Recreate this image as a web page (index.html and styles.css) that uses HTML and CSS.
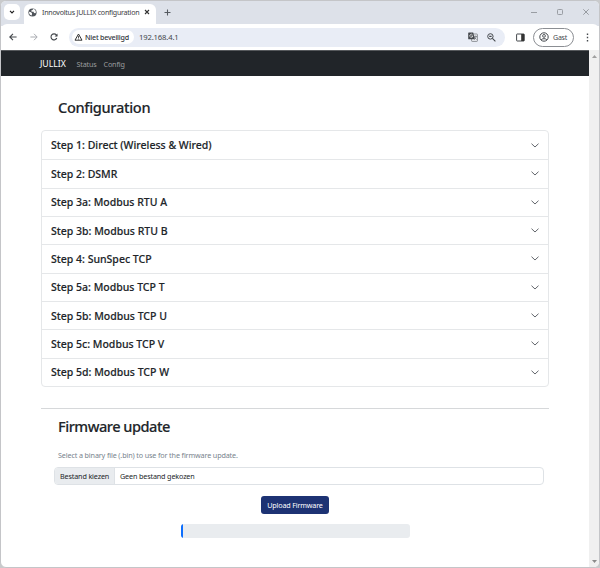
FILE: index.html
```html
<!DOCTYPE html>
<html lang="nl">
<head>
<meta charset="utf-8">
<title>Innovoltus JULLIX configuration</title>
<link rel="stylesheet" href="styles.css">
</head>
<body>
<div class="window">
  <header class="tabstrip">
    <div class="tabsearch"><svg width="6" height="4" viewBox="0 0 6 4"><path d="M1 .8l2 2 2-2" fill="none" stroke="#222" stroke-width="1.2"/></svg></div>
    <div class="tab">
      <svg class="globe" width="9" height="9" viewBox="0 0 9 9"><circle cx="4.5" cy="4.5" r="4.1" fill="#50555b"/><path d="M1.1 3.8l2 .5 1 1.1-.4 2.2C1.8 7.2.8 5.5 1.1 3.8zM5.1.9l-.5 1.2-1.4.5.4 1.1 2 .1.4 1.3 1.2.2.7-.8C8 2.3 6.8 1.1 5.1.9z" fill="#fff"/></svg>
      <span class="tab-title">Innovoltus JULLIX configuration</span>
      <svg class="tab-close" width="6" height="6" viewBox="0 0 6 6"><path d="M1 1l4 4M5 1L1 5" stroke="#333" stroke-width="1.1"/></svg>
    </div>
    <svg class="newtab" width="7" height="7" viewBox="0 0 7 7"><path d="M3.5.5v6M.5 3.5h6" stroke="#555a60" stroke-width="1.1"/></svg>
    <div class="controls">
      <svg width="6" height="6" viewBox="0 0 6 6"><path d="M0 3.5h6" stroke="#999da3"/></svg>
      <svg width="6" height="6" viewBox="0 0 6 6"><rect x=".5" y=".5" width="5" height="5" rx=".8" fill="none" stroke="#999da3"/></svg>
      <svg width="6" height="6" viewBox="0 0 6 6"><path d="M.3.3l5.4 5.4M5.7.3L.3 5.7" stroke="#8f9399" stroke-width=".9"/></svg>
    </div>
  </header>
  <div class="toolbar">
    <svg width="8" height="8" viewBox="0 0 8 8"><path d="M7.6 4H1M4 .8L.8 4 4 7.2" fill="none" stroke="#44484d" stroke-width="1.1"/></svg>
    <svg class="forward" width="8" height="8" viewBox="0 0 8 8"><path d="M.4 4H7M4 .8L7.2 4 4 7.2" fill="none" stroke="#a8abb0" stroke-width="1"/></svg>
    <svg class="reload" width="8" height="8" viewBox="0 0 8 8"><path d="M6.8 5A3 3 0 1 1 6.3 1.9L7 2.8" fill="none" stroke="#44484d" stroke-width="1.1"/><path d="M7.5.4v3H4.6z" fill="#44484d"/></svg>
    <div class="address">
      <div class="unsafe"><svg width="9" height="8" viewBox="0 0 9 8"><path d="M4.5 1L8 7.2H1z" fill="none" stroke="#333" stroke-width="1" stroke-linejoin="round"/><path d="M4.5 3v2M4.5 5.5v1" stroke="#333" stroke-width=".8"/></svg><span>Niet beveiligd</span></div>
      <span class="url">192.168.4.1</span>
      <svg class="translate" width="10" height="10" viewBox="0 0 10 10"><rect x="3.6" y="2" width="5.8" height="7.4" rx=".6" fill="#eef0f5" stroke="#777b80" stroke-width=".8"/><path d="M5.5 4.4H9M7.2 3.5v1M8.3 4.5C8 6 7 7 6 7.6M6 5l2.5 2.6" fill="none" stroke="#666a70" stroke-width=".7"/><path d="M.8.5h4.4l1.6 6.8h-6a.6.6 0 0 1-.6-.6V1.1C.2.8.5.5.8.5z" fill="#44484d"/><path d="M4.5 2.9A1.5 1.5 0 1 0 4.8 4H3.3" fill="none" stroke="#fff" stroke-width=".7"/></svg>
      <svg class="magnifier" width="9" height="9" viewBox="0 0 9 9"><circle cx="3.4" cy="3.4" r="2.7" fill="none" stroke="#44484d"/><path d="M5.4 5.4l3 3M2.2 3.4h2.4" stroke="#44484d" stroke-width="1.1"/></svg>
    </div>
    <svg class="panel" width="9" height="9" viewBox="0 0 9 9"><rect x=".6" y="1" width="7.6" height="7" rx=".5" fill="none" stroke="#44484d"/><path d="M5.2 1h3v7h-3z" fill="#333"/></svg>
    <div class="guest"><svg width="10" height="10" viewBox="0 0 10 10"><circle cx="5" cy="5" r="4.2" fill="none" stroke="#44484d"/><circle cx="5" cy="3.9" r="1.4" fill="none" stroke="#44484d" stroke-width=".9"/><path d="M2.2 7.8C3.4 6.3 6.6 6.3 7.8 7.8" fill="none" stroke="#44484d"/></svg><span>Gast</span></div>
    <svg class="dots" width="3" height="9" viewBox="0 0 3 9"><path d="M.8.5h1.4v1.4H.8zM.8 3.8h1.4v1.4H.8zM.8 7.1h1.4v1.4H.8z" fill="#44484d"/></svg>
  </div>
  <div class="viewport">
    <div class="page">
      <nav class="navbar"><span class="brand">JULLIX</span><span class="link status">Status</span><span class="link config">Config</span></nav>
      <main class="container">
        <h1 class="title-config">Configuration</h1>
        <div class="accordion">
          <div class="item"><span>Step 1: Direct (Wireless &amp; Wired)</span><svg class="chev" viewBox="0 0 8 5"><path d="M.5.7L4 4 7.5.7"/></svg></div>
          <div class="item"><span>Step 2: DSMR</span><svg class="chev" viewBox="0 0 8 5"><path d="M.5.7L4 4 7.5.7"/></svg></div>
          <div class="item"><span>Step 3a: Modbus RTU A</span><svg class="chev" viewBox="0 0 8 5"><path d="M.5.7L4 4 7.5.7"/></svg></div>
          <div class="item"><span>Step 3b: Modbus RTU B</span><svg class="chev" viewBox="0 0 8 5"><path d="M.5.7L4 4 7.5.7"/></svg></div>
          <div class="item"><span>Step 4: SunSpec TCP</span><svg class="chev" viewBox="0 0 8 5"><path d="M.5.7L4 4 7.5.7"/></svg></div>
          <div class="item"><span>Step 5a: Modbus TCP T</span><svg class="chev" viewBox="0 0 8 5"><path d="M.5.7L4 4 7.5.7"/></svg></div>
          <div class="item"><span>Step 5b: Modbus TCP U</span><svg class="chev" viewBox="0 0 8 5"><path d="M.5.7L4 4 7.5.7"/></svg></div>
          <div class="item"><span>Step 5c: Modbus TCP V</span><svg class="chev" viewBox="0 0 8 5"><path d="M.5.7L4 4 7.5.7"/></svg></div>
          <div class="item"><span>Step 5d: Modbus TCP W</span><svg class="chev" viewBox="0 0 8 5"><path d="M.5.7L4 4 7.5.7"/></svg></div>
        </div>
        <section class="firmware">
          <h1 class="title-firmware">Firmware update</h1>
          <p class="hint">Select a binary file (.bin) to use for the firmware update.</p>
          <div class="file"><span class="choose">Bestand kiezen</span><span class="chosen">Geen bestand gekozen</span></div>
          <button class="upload">Upload Firmware</button>
          <div class="progress"><div class="bar"></div></div>
        </section>
      </main>
    </div>
    <div class="scrollbar">
      <svg width="5" height="3" viewBox="0 0 5 3"><path d="M0 3L2.5 0 5 3z" fill="#a0a0a0"/></svg>
      <svg width="5" height="3" viewBox="0 0 5 3"><path d="M0 0h5L2.5 3z" fill="#8a8a8a"/></svg>
    </div>
  </div>
</div>
</body>
</html>
```
FILE: styles.css
```css
* { box-sizing: border-box; }
body {
  margin: 0;
  background: #c9cacc;
  font-family: "Noto Sans", "Open Sans", sans-serif;
  color: #212529;
}
svg { display: block; flex: none; }
span, p, h1, button { white-space: nowrap; }
.window {
  width: 600px;
  height: 568px;
  border: 1px solid #c4c5c8;
  border-radius: 6px;
  background: #fff;
  overflow: hidden;
  display: flex;
  flex-direction: column;
}
.tabstrip {
  height: 25px;
  flex: none;
  background: #dde1e9;
  display: flex;
  align-items: center;
  padding: 0 9px 3px 3px;
}
.tabsearch {
  width: 16px;
  height: 16px;
  border-radius: 5px;
  background: #fff;
  display: flex;
  align-items: center;
  justify-content: center;
}
.tab {
  width: 132px;
  height: 22px;
  margin-left: 4px;
  align-self: flex-end;
  margin-bottom: -3px;
  padding: 0 6px 6px 4px;
  border-radius: 6px 6px 0 0;
  background: #fff;
  display: flex;
  align-items: center;
}
.tab-title { font-size: 7.1px; color: #3c4043; margin-left: 5px; letter-spacing: -0.25px; }
.tab-close { margin-left: auto; }
.newtab { margin-left: 8px; }
.controls { margin-left: auto; display: flex; gap: 20px; padding-right: 1px; }
.toolbar {
  height: 26px;
  margin-top: -2px;
  flex: none;
  background: #fff;
  border-radius: 6px 6px 0 0;
  display: flex;
  align-items: center;
  padding: 0 10px 0 8px;
}
.forward { margin-left: 13px; }
.reload { margin-left: 12px; }
.address {
  width: 436px;
  height: 19px;
  margin-left: 11px;
  border-radius: 10px;
  background: #e9edf6;
  display: flex;
  align-items: center;
  padding: 0 9px 0 3px;
}
.unsafe {
  width: 62px;
  height: 14px;
  border-radius: 7px;
  background: #fff;
  padding-left: 2px;
  display: flex;
  align-items: center;
  font-size: 7.1px;
  font-weight: 500;
  color: #30343a;
}
.unsafe span { margin-left: 2px; letter-spacing: -0.2px; }
.url { font-size: 7.7px; color: #44484d; margin-left: 5px; letter-spacing: -0.16px; }
.translate { margin-left: auto; }
.magnifier { margin-left: 9px; }
.panel { margin-left: 11px; }
.guest {
  width: 41px;
  height: 19px;
  margin-left: 8px;
  border: 1px solid #8b8e93;
  border-radius: 10px;
  display: flex;
  align-items: center;
  padding-left: 5px;
  font-size: 7px;
  color: #44484d;
}
.guest span { margin-left: 4px; letter-spacing: -0.2px; }
.dots { margin-left: auto; }
.viewport { flex: 1; min-height: 0; display: flex; border-top: 1px solid #56595c; }
.page { flex: 1; }
.navbar {
  height: 25px;
  background: #212529;
  display: flex;
  align-items: center;
  padding-left: 39px;
  color: #fff;
}
.brand { font-size: 8.7px; width: 36.5px; }
.link { font-size: 7.2px; color: #9b9d9f; width: 27px; letter-spacing: -0.15px; }
.container { padding: 0 40px; }
h1 { margin: 0; font-size: 14.6px; font-weight: 500; line-height: 20px; padding-left: 17px; -webkit-text-stroke: 0.15px #212529; }
.title-config { padding-top: 21px; height: 54px; letter-spacing: -0.33px; }
.accordion { border: 1px solid #e5e7e9; border-radius: 4px; height: 257px; display: grid; grid-template-rows: repeat(9, 1fr); }
.item {
  display: flex;
  align-items: center;
  justify-content: space-between;
  padding: 0 9px;
  font-size: 10.5px;
  font-weight: 500;
  line-height: 14px;
  -webkit-text-stroke: 0.15px #212529;
}
.item + .item { border-top: 1px solid #e5e7e9; }
.chev { width: 8px; height: 5px; }
.chev path { fill: none; stroke: #50545a; stroke-width: .9; }
.firmware { margin-top: 21px; border-top: 1px solid #d6d8da; display: flex; flex-direction: column; }
.title-firmware { margin-top: 7px; letter-spacing: -0.5px; }
.hint { margin: 14px 0 0 17px; font-size: 7.2px; line-height: 10px; color: #78838d; letter-spacing: -0.13px; }
.file {
  width: 490px;
  height: 18px;
  margin: 7px 0 0 13px;
  border: 1px solid #dee2e6;
  border-radius: 4px;
  overflow: hidden;
  display: flex;
  align-items: stretch;
  font-size: 7.2px;
  line-height: 16px;
  letter-spacing: -0.14px;
}
.choose { width: 60px; padding-left: 5px; background: #e9ecef; border-right: 1px solid #dee2e6; }
.chosen { padding-left: 5px; }
.upload {
  width: 68px;
  height: 18px;
  margin: 11px 0 0 220px;
  padding: 0;
  border: 0;
  border-radius: 3px;
  background: #1d3273;
  color: #fff;
  font: 7.2px/18px "Noto Sans", sans-serif;
  letter-spacing: -0.17px;
}
.progress { width: 229px; height: 14px; margin: 10px 0 0 140px; border-radius: 3px; background: #e9ecef; overflow: hidden; }
.bar { width: 2px; height: 14px; background: #0d6efd; }
.scrollbar {
  width: 10px;
  margin-top: -1px;
  background: #f0f0f0;
  display: flex;
  flex-direction: column;
  align-items: center;
  justify-content: space-between;
  padding: 5px 0 4px;
}
```
